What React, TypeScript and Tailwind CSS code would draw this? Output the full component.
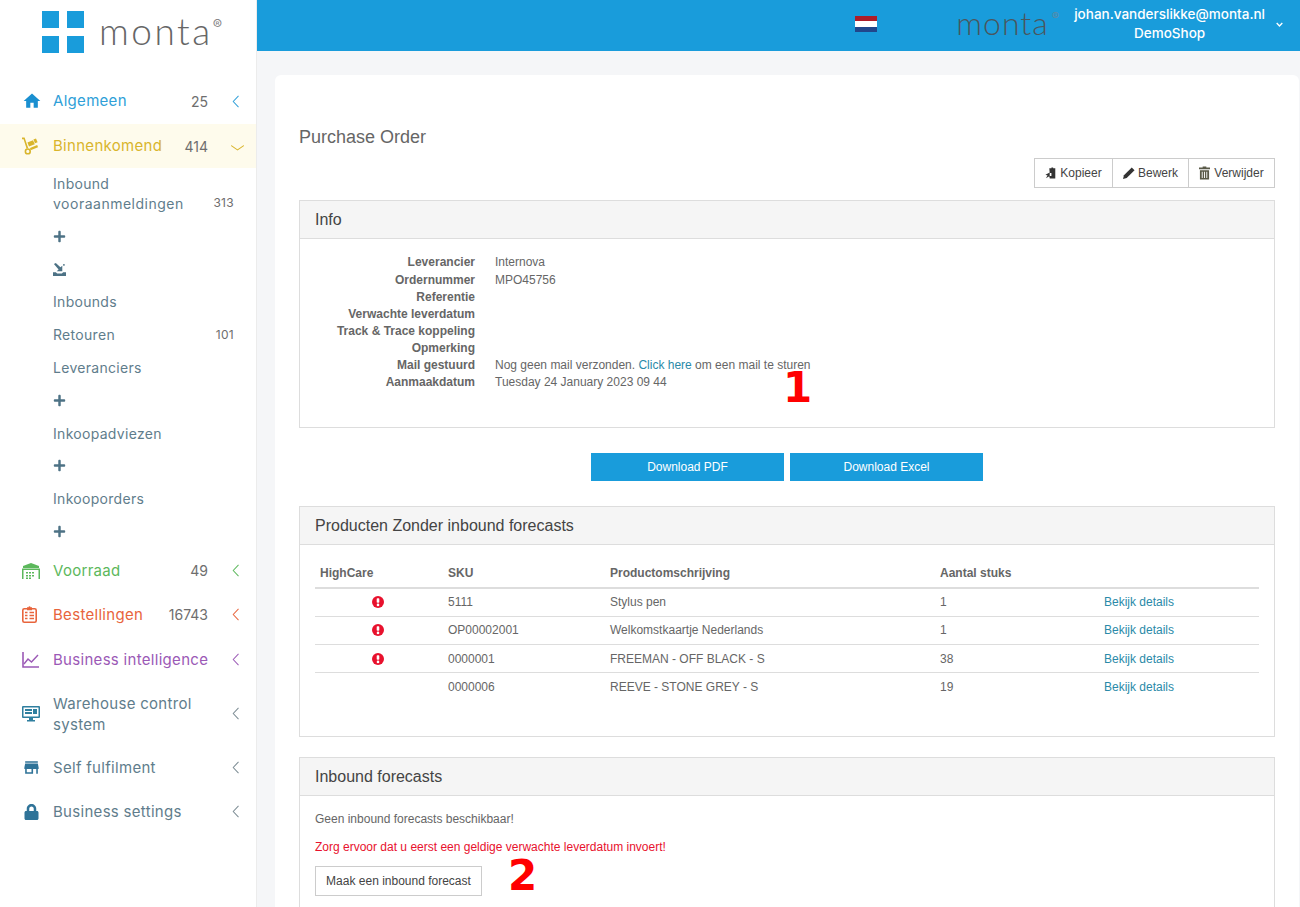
import React from "react";
import { FaLock, FaPlus } from "react-icons/fa";
import { MdHome, MdStore } from "react-icons/md";

const sansMenu = "font-['Inter','Noto_Sans',sans-serif]";

const Chevron = ({ down, className }: { down?: boolean; className: string }) => (
  <svg viewBox="0 0 12 16" className={down ? `w-[13px] h-[8px] ${className}` : `w-[9px] h-[13px] ${className}`} fill="none" stroke="currentColor" strokeWidth="1.3" preserveAspectRatio="none">
    {down ? <path d="M0 3l6 9 6-9" /> : <path d="M10 1L3 8l7 7" />}
  </svg>
);

const Dolly = () => (
  <svg viewBox="0 0 16 18" className="w-[16px] h-[18px]" fill="currentColor">
    <path d="M0 0.5h2.6l3.6 10.6-1.6.6L1.6 2.2H0z" />
    <circle cx="5.8" cy="14.4" r="2.4" fill="none" stroke="currentColor" strokeWidth="1.6" />
    <path d="M5.4 5.6l5.6-2.4 1.8 4-5.8 2.4z" />
    <path d="M8 11l7.2-3 .8 2.2-7.4 3z" />
    <path d="M11.4 2.6l2.6-1 1.6 3.6-2.6 1z" />
  </svg>
);

const Warehouse = () => (
  <svg viewBox="0 0 18 16" className="w-[18px] h-[16px]" fill="currentColor">
    <path d="M9 0l8 3v2H1V3z" />
    <path d="M0 5.5h18V16h-1.5V7h-15v9H0z" />
    <path d="M4 9h2v1.5H4zM7 9h2v1.5H7zM10 9h2v1.5h-2zM4 12h2v1.5H4zM7 12h2v1.5H7zM10 12h2v1.5h-2zM4 14.6h2V16H4zM7 14.6h2V16H7z" />
  </svg>
);

const Clipboard = () => (
  <svg viewBox="0 0 15 17" className="w-[15px] h-[17px]" fill="none" stroke="currentColor">
    <rect x="0.8" y="2.8" width="13.4" height="13.4" rx="1.5" strokeWidth="1.6" />
    <path d="M5 1.2h1.5a1 1 0 012 0H10v3H5z" fill="currentColor" stroke="none" />
    <path d="M7.5 6.5h4.5M7.5 9.5h4.5M7.5 12.5h4.5" strokeWidth="1.4" />
    <path d="M3 6.5h2.5M3 9.5h2.5M3 12.5h2.5" strokeWidth="1.4" />
  </svg>
);

const LineChart = () => (
  <svg viewBox="0 0 17 16" className="w-[17px] h-[16px]" fill="none" stroke="currentColor">
    <path d="M1 0v15h16" strokeWidth="1.6" />
    <path d="M2 12l4-5 3.5 3L16 3" strokeWidth="1.4" />
  </svg>
);

const Monitor = () => (
  <svg viewBox="0 0 18 16" className="w-[18px] h-[16px]" fill="currentColor">
    <path fillRule="evenodd" d="M1 0h16a1 1 0 011 1v10a1 1 0 01-1 1H1a1 1 0 01-1-1V1a1 1 0 011-1zm.5 1.5v9h15v-9z" />
    <path d="M3 3h7v2H3zM11 3h4v5h-4zM3 6h7v2H3zM7 12h4v2h2v1.4H5V14h2z" />
  </svg>
);

const ImportIcon = () => (
  <svg viewBox="0 0 14 14" className="w-[13px] h-[13px]" fill="currentColor">
    <path d="M1 1l2-1 5 4.5L10 3v6H4l2-2zM0 10h3l1.5 1.2h5L11 10h3v4H0z" />
    <path d="M11 1h1.5v2H11z" />
  </svg>
);

const MenuRow = ({ label, count, text, icon, h = "h-[44px]" }: { label: string; count?: string; text: string; icon: React.ReactNode; h?: string }) => (
  <div className={`flex items-center ${h} pl-[22px] pr-[16px] ${text}`}>
    <div className="w-[31px] flex items-center">{icon}</div>
    <span className="flex-1 text-[15px] tracking-[0.3px] whitespace-nowrap">{label}</span>
    {count && <span className="text-[14px] text-[#6e6e6e] mr-[12px]">{count}</span>}
    <Chevron className="ml-[11px]" />
  </div>
);

const SubRow = ({ children, count }: { children: React.ReactNode; count?: string }) => (
  <div className="flex items-center justify-between h-[32.8px] pl-[53px] pr-[22px] text-[14px] tracking-[0.3px] text-[#5f7d8c]">
    <span>{children}</span>
    {count && <span className="text-[12px] text-[#6e6e6e]">{count}</span>}
  </div>
);

const Plus = () => <FaPlus className="w-[13px] h-[13px] text-[#4d7285]" />;

const Sidebar = () => (
  <aside className={`w-[257px] shrink-0 bg-white border-r border-[#ececec] ${sansMenu}`}>
    <div className="h-[79px] flex items-start pl-[42px] pt-[11px]">
      <div className="grid grid-cols-2 gap-[8px] w-[42px]">
        <div className="h-[17px] bg-[#199cdb]" />
        <div className="h-[17px] bg-[#199cdb]" />
        <div className="h-[17px] bg-[#199cdb]" />
        <div className="h-[17px] bg-[#199cdb]" />
      </div>
      <span className="ml-[15px] -mt-[4px] text-[37px] leading-[48px] font-light tracking-[2.5px] text-[#666] font-['Lato',sans-serif]">monta</span>
      <span className="text-[14px] leading-none mt-[7px] text-[#888]">®</span>
    </div>

    <div className="mb-[1px]">
      <MenuRow label="Algemeen" count="25" text="text-[#2f9fd8]" icon={<MdHome className="w-[20px] h-[20px] text-[#1a8fd0]" />} />
    </div>

    <div className="flex items-center h-[44px] pl-[22px] pr-[12px] bg-[#fefbec] text-[#d9b52c]">
      <div className="w-[31px] flex items-center"><Dolly /></div>
      <span className="flex-1 text-[15px] tracking-[0.3px]">Binnenkomend</span>
      <span className="text-[14px] text-[#6e6e6e] mr-[23px]">414</span>
      <Chevron down className="mt-[3px]" />
    </div>

    <div className="flex items-end justify-between h-[52px] pl-[53px] pr-[22px] pb-[6px] text-[14px] leading-[20px] tracking-[0.3px] text-[#5f7d8c]">
      <span>Inbound<br /><span className="tracking-[0.5px]">vooraanmeldingen</span></span>
      <span className="text-[12px] text-[#6e6e6e] mb-[1px]">313</span>
    </div>
    <SubRow><Plus /></SubRow>
    <SubRow><span className="text-[#4d7285]"><ImportIcon /></span></SubRow>
    <SubRow>Inbounds</SubRow>
    <SubRow count="101">Retouren</SubRow>
    <SubRow>Leveranciers</SubRow>
    <SubRow><Plus /></SubRow>
    <SubRow>Inkoopadviezen</SubRow>
    <SubRow><Plus /></SubRow>
    <SubRow>Inkooporders</SubRow>
    <div className="mb-[1px]">
      <SubRow><Plus /></SubRow>
    </div>

    <MenuRow label="Voorraad" count="49" text="text-[#5cb85c]" icon={<Warehouse />} />
    <MenuRow label="Bestellingen" count="16743" text="text-[#e8643c]" icon={<Clipboard />} />
    <MenuRow label="Business intelligence" text="text-[#9b59b6]" icon={<LineChart />} h="h-[45px] pt-[1px]" />

    <div className="flex items-center h-[64px] pl-[22px] pr-[16px] text-[#5f7d8c]">
      <div className="w-[31px] flex items-center text-[#2f7f9f]"><Monitor /></div>
      <span className="flex-1 text-[15px] leading-[21px] tracking-[0.3px]">Warehouse control<br />system</span>
      <Chevron className="ml-[11px] text-[#7a8a92]" />
    </div>

    <div className="flex items-center h-[44px] pl-[22px] pr-[16px] text-[#5f7d8c]">
      <div className="w-[31px] flex items-center text-[#2f7398]"><MdStore className="w-[19px] h-[19px]" /></div>
      <span className="flex-1 text-[15px] tracking-[0.3px]">Self fulfilment</span>
      <Chevron className="ml-[11px] text-[#7a8a92]" />
    </div>
    <div className="flex items-center h-[44px] pl-[24px] pr-[16px] text-[#5f7d8c]">
      <div className="w-[29px] flex items-center text-[#2f7398]"><FaLock className="w-[15px] h-[16px]" /></div>
      <span className="flex-1 text-[15px] tracking-[0.3px]">Business settings</span>
      <Chevron className="ml-[11px] text-[#7a8a92]" />
    </div>
  </aside>
);

const TopBar = () => (
  <header className={`h-[51px] shrink-0 bg-[#199cdb] flex items-center justify-end pr-[17px] ${sansMenu}`}>
    <div className="w-[22px] h-[16px] flex flex-col mr-[79px] mb-[3px]">
      <div className="flex-1 bg-[#ae1c28]" />
      <div className="flex-1 bg-white" />
      <div className="flex-1 bg-[#21468b]" />
    </div>
    <span className="text-[32px] leading-none font-light tracking-[1px] text-[#4a565e] font-['Lato',sans-serif] mb-[5px]">monta</span>
    <span className="text-[11px] leading-none ml-[3px] text-[#5f8aa5] mb-[18px] mr-[15px]">®</span>
    <div className="text-white text-[13.5px] leading-[19px] font-medium text-center whitespace-nowrap mb-[4px]">
      <div>johan.vanderslikke@monta.nl</div>
      <div>DemoShop</div>
    </div>
    <svg viewBox="0 0 10 6" className="w-[7px] h-[5px] ml-[11px] mb-[2px] text-white" fill="none" stroke="currentColor" strokeWidth="2">
      <path d="M1 1l4 4 4-4" />
    </svg>
  </header>
);

const Panel = ({ title, children }: { title: string; children: React.ReactNode }) => (
  <section className="border border-[#ddd]">
    <div className="h-[38px] px-[15px] flex items-center bg-[#f5f5f5] border-b border-[#ddd] text-[16px] text-[#444]">{title}</div>
    {children}
  </section>
);

const infoRows: [string, React.ReactNode][] = [
  ["Leverancier", "Internova"],
  ["Ordernummer", "MPO45756"],
  ["Referentie", ""],
  ["Verwachte leverdatum", ""],
  ["Track & Trace koppeling", ""],
  ["Opmerking", ""],
  ["Mail gestuurd", <>Nog geen mail verzonden. <span className="text-[#2a8aa8]">Click here</span> om een mail te sturen</>],
  ["Aanmaakdatum", "Tuesday 24 January 2023 09 44"],
];

const products = [
  { high: true, sku: "5111", name: "Stylus pen", qty: "1" },
  { high: true, sku: "OP00002001", name: "Welkomstkaartje Nederlands", qty: "1" },
  { high: true, sku: "0000001", name: "FREEMAN - OFF BLACK - S", qty: "38" },
  { high: false, sku: "0000006", name: "REEVE - STONE GREY - S", qty: "19" },
];

const Alert = () => (
  <svg viewBox="0 0 12 12" className="w-[12px] h-[12px] mx-auto block">
    <circle cx="6" cy="6" r="6" fill="#e8112d" />
    <rect x="4.7" y="2.2" width="2.6" height="4.6" rx="0.8" fill="#fff" />
    <circle cx="6" cy="8.9" r="1.3" fill="#fff" />
  </svg>
);

const CopyIcon = () => (
  <svg viewBox="0 0 14 13" className="w-[12px] h-[12px]" fill="#333">
    <path d="M5 1h2.5V0h2v1H12v12H5.5V10H7.5V6.5H5.5z" />
    <path d="M5.5 6L0.5 8.5 3 9.5 1 12.5 4.5 10.5 5.5 12z" />
  </svg>
);
const PencilIcon = () => (
  <svg viewBox="0 0 13 13" className="w-[12px] h-[12px]" fill="#333">
    <path d="M9.5 0.5l3 3L4 12 0 13l1-4z" />
  </svg>
);
const TrashIcon = () => (
  <svg viewBox="0 0 12 14" className="w-[11px] h-[14px]" fill="#5a5a48">
    <path d="M4 0h4v1h4v2H0V1h4zM1 4h10v10H1zm2 1.5v7h1v-7zm2.5 0v7h1v-7zm2.5 0v7h1v-7z" fillRule="evenodd" />
  </svg>
);

const App = () => {
  return (
    <div className="flex h-screen overflow-hidden bg-[#f5f6f8] font-['Liberation_Sans',Arial,sans-serif] text-[12px] text-[#666]">
      <Sidebar />
      <div className="flex-1 min-w-0 flex flex-col">
        <TopBar />
        <main className="flex-1 pt-[24px] pl-[18px]">
          <div className="mr-px bg-white rounded-t-[6px] pt-[52px] pl-[24px] pr-[24px]">
            <h1 className="text-[18px] leading-[20px] text-[#666]">Purchase Order</h1>

            <div className="flex justify-end mt-[11px] mb-[12px] h-[30px] text-[#444]">
              <div className="flex border border-[#ccc]">
                <div className="w-[77px] flex items-center justify-center gap-[3px]"><CopyIcon />Kopieer</div>
                <div className="w-[76px] flex items-center justify-center gap-[3px] border-l border-[#ccc]"><PencilIcon />Bewerk</div>
                <div className="w-[86px] flex items-center justify-center gap-[4px] border-l border-[#ccc]"><TrashIcon />Verwijder</div>
              </div>
            </div>

            <Panel title="Info">
              <div className="relative h-[188px] pt-[15px]">
                {infoRows.map(([label, value], i) => (
                  <div key={label} className={`flex leading-[17px] ${i === 0 ? "h-[18px]" : "h-[17px]"}`}>
                    <div className="w-[175px] text-right font-bold text-[#666]">{label}</div>
                    <div className="ml-[20px]">{value}</div>
                  </div>
                ))}
                <div className="absolute left-[483px] top-[134px] text-[42px] leading-[30px] font-bold text-[#f00] font-['DejaVu_Sans',sans-serif]">1</div>
              </div>
            </Panel>

            <div className="flex justify-center gap-[6px] mt-[25px] mb-[25px]">
              <div className="w-[193px] h-[28px] flex items-center justify-center bg-[#199cdb] text-white">Download PDF</div>
              <div className="w-[193px] h-[28px] flex items-center justify-center bg-[#199cdb] text-white">Download Excel</div>
            </div>

            <Panel title="Producten Zonder inbound forecasts">
              <div className="px-[15px] pt-[14px] pb-[35px]">
                <table className="w-full table-fixed border-collapse">
                  <thead>
                    <tr className="h-[29px] border-b-2 border-[#ddd] font-bold text-left">
                      <th className="w-[128px] pl-[5px]">HighCare</th>
                      <th className="w-[162px] pl-[5px]">SKU</th>
                      <th className="w-[330px] pl-[5px]">Productomschrijving</th>
                      <th className="w-[164px] pl-[5px]">Aantal stuks</th>
                      <th />
                    </tr>
                  </thead>
                  <tbody>
                    {products.map((p) => (
                      <tr key={p.sku} className="h-[28.3px] border-b border-[#ddd] last:border-b-0">
                        <td className="pr-[2px]">{p.high && <Alert />}</td>
                        <td className="pl-[5px]">{p.sku}</td>
                        <td className="pl-[5px]">{p.name}</td>
                        <td className="pl-[5px]">{p.qty}</td>
                        <td className="pl-[5px] text-[#2a8aa8]">Bekijk details</td>
                      </tr>
                    ))}
                  </tbody>
                </table>
              </div>
            </Panel>

            <div className="mt-[20px]">
              <Panel title="Inbound forecasts">
                <div className="relative px-[15px] pt-[15px] pb-[30px]">
                  <p className="leading-[17px]">Geen inbound forecasts beschikbaar!</p>
                  <p className="mt-[11px] leading-[17px] text-[#e8112d]">Zorg ervoor dat u eerst een geldige verwachte leverdatum invoert!</p>
                  <div className="mt-[10px] w-[167px] h-[30px] flex items-center justify-center border border-[#ccc] text-[#444]">Maak een inbound forecast</div>
                  <div className="absolute left-[208px] top-[65px] text-[42px] leading-[30px] font-bold text-[#f00] font-['DejaVu_Sans',sans-serif]">2</div>
                </div>
              </Panel>
            </div>
          </div>
        </main>
      </div>
    </div>
  );
};

export default App;
